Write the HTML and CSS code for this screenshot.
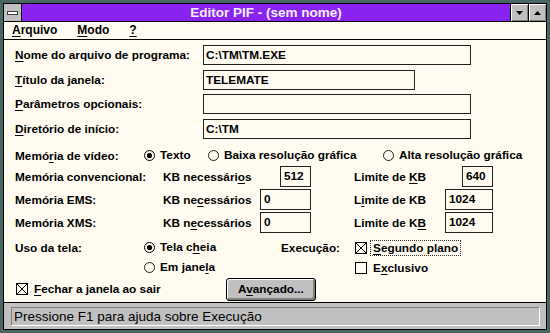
FILE: index.html
```html
<!DOCTYPE html>
<html lang="pt">
<head>
    <meta charset="UTF-8">
    <title>Editor PIF</title>
    <link rel="stylesheet" href="styles.css">
</head>
<body>

<div class="window">
  <div class="inner">

    <div class="titlebar">
        <div class="sysmenu"><span class="sysbar"></span></div>
        <div class="title">Editor PIF - (sem nome)</div>
        <div class="tbtn">
            <svg width="7" height="4" viewBox="0 0 7 4"><path d="M0 0h7L3.5 4z" fill="#000"/></svg>
        </div>
        <div class="tbtn">
            <svg width="7" height="4" viewBox="0 0 7 4"><path d="M0 4h7L3.5 0z" fill="#000"/></svg>
        </div>
    </div>

    <div class="menubar">
        <span><u>A</u>rquivo</span>
        <span><u>M</u>odo</span>
        <span><u>?</u></span>
    </div>

    <div class="content">
        <div class="field-row">
            <div class="flabel"><u>N</u>ome do arquivo de programa:</div>
            <div class="edit wide">C:\TM\TM.EXE</div>
        </div>
        <div class="field-row r2">
            <div class="flabel"><u>T</u>ítulo da janela:</div>
            <div class="edit short">TELEMATE</div>
        </div>
        <div class="field-row r3">
            <div class="flabel"><u>P</u>arâmetros opcionais:</div>
            <div class="edit wide"></div>
        </div>
        <div class="field-row r4">
            <div class="flabel"><u>D</u>iretório de início:</div>
            <div class="edit wide">C:\TM</div>
        </div>

        <div class="mrow video">
            <div class="mlabel">Memó<u>r</u>ia de vídeo:</div>
            <div class="vopt v1">
                <span class="radio"><svg width="11" height="11" viewBox="0 0 11 11"><circle cx="5.5" cy="5.5" r="5" fill="#fffbf0" stroke="#000"/><circle cx="5.5" cy="5.5" r="2.6" fill="#000"/></svg><span>Texto</span></span>
            </div>
            <div class="vopt v2">
                <span class="radio"><svg width="11" height="11" viewBox="0 0 11 11"><circle cx="5.5" cy="5.5" r="5" fill="#fffbf0" stroke="#222"/></svg><span>Baixa resolução gráfica</span></span>
            </div>
            <div class="vopt">
                <span class="radio"><svg width="11" height="11" viewBox="0 0 11 11"><circle cx="5.5" cy="5.5" r="5" fill="#fffbf0" stroke="#222"/></svg><span>Alta resolução gráfica</span></span>
            </div>
        </div>

        <div class="mrow conv">
            <div class="mlabel">Memória convencional:</div>
            <div class="kbcol">
                <span>KB necessári<u>o</u>s</span>
                <div class="numbox small">512</div>
            </div>
            <div class="limcol">
                <span>Limite de <u>K</u>B</span>
                <div class="numbox small">640</div>
            </div>
        </div>

        <div class="mrow ems">
            <div class="mlabel">Memória EMS:</div>
            <div class="kbcol">
                <span>KB ne<u>c</u>essários</span>
                <div class="numbox mid">0</div>
            </div>
            <div class="limcol">
                <span>L<u>i</u>mite de KB</span>
                <div class="numbox large">1024</div>
            </div>
        </div>

        <div class="mrow xms">
            <div class="mlabel">Memória XMS:</div>
            <div class="kbcol">
                <span>KB n<u>e</u>cessários</span>
                <div class="numbox mid">0</div>
            </div>
            <div class="limcol">
                <span>Limite de K<u>B</u></span>
                <div class="numbox large">1024</div>
            </div>
        </div>

        <div class="urow uso">
            <div class="mlabel">Uso da tela:</div>
            <div class="radcol">
                <span class="radio"><svg width="11" height="11" viewBox="0 0 11 11"><circle cx="5.5" cy="5.5" r="5" fill="#fffbf0" stroke="#000"/><circle cx="5.5" cy="5.5" r="2.6" fill="#000"/></svg><span>Tela c<u>h</u>eia</span></span>
            </div>
            <div class="exlabel">Execução:</div>
            <span class="check">
                <svg width="12" height="12" viewBox="0 0 12 12"><rect x="0.5" y="0.5" width="11" height="11" fill="#fffbf0" stroke="#000"/><path d="M1 1L11 11M11 1L1 11" stroke="#000"/></svg>
                <span class="focus"><u>S</u>egundo plano</span>
            </span>
        </div>

        <div class="urow">
            <div class="mlabel"></div>
            <div class="radcol">
                <span class="radio"><svg width="11" height="11" viewBox="0 0 11 11"><circle cx="5.5" cy="5.5" r="5" fill="#fffbf0" stroke="#222"/></svg><span>Em jane<u>l</u>a</span></span>
            </div>
            <div class="exlabel"></div>
            <span class="check">
                <svg width="12" height="12" viewBox="0 0 12 12"><rect x="0.5" y="0.5" width="11" height="11" fill="#fffbf0" stroke="#000"/></svg>
                <span>E<u>x</u>clusivo</span>
            </span>
        </div>

        <div class="brow">
            <div class="closecol">
                <span class="check">
                    <svg width="12" height="12" viewBox="0 0 12 12"><rect x="0.5" y="0.5" width="11" height="11" fill="#fffbf0" stroke="#000"/><path d="M1 1L11 11M11 1L1 11" stroke="#000"/></svg>
                    <span><u>F</u>echar a janela ao sair</span>
                </span>
            </div>
            <div class="btn">A<u>v</u>ançado...</div>
        </div>
    </div>

    <div class="statusbar">
        <div class="status-field">Pressione F1 para ajuda sobre Execução</div>
    </div>

  </div>
</div>

</body>
</html>
```

FILE: styles.css
```css
* {
    box-sizing: border-box;
}

body {
    margin: 0;
    font-family: "Liberation Sans", Arial, sans-serif;
    font-size: 11.8px;
    font-weight: bold;
    color: #000;
    white-space: nowrap;
}

u {
    text-decoration-thickness: 1px;
    text-underline-offset: 2px;
}

.window {
    width: 550px;
    height: 333px;
    border: 3px solid #4a6662;
}

.inner {
    height: 100%;
    border: 1px solid #000;
    display: flex;
    flex-direction: column;
    background: #fffbf0;
}

/* title bar */
.titlebar {
    height: 18px;
    display: flex;
    border-bottom: 1px solid #000;
    background: #8a22f2;
}

.sysmenu {
    width: 18px;
    border-right: 1px solid #000;
    background: #c0c0c0;
    display: flex;
    align-items: center;
    justify-content: center;
}

.sysbar {
    width: 11px;
    height: 4px;
    background: #fff;
    border: 1px solid #404040;
}

.title {
    flex: 1;
    text-align: center;
    color: #f6efff;
    font-size: 13.5px;
    line-height: 17px;
}

.tbtn {
    width: 18px;
    border-left: 1px solid #000;
    background: #c0c0c0;
    box-shadow: inset 1px 1px #fff, inset -1px -1px #808080;
    display: flex;
    align-items: center;
    justify-content: center;
}

/* menu */
.menubar {
    height: 18px;
    border-bottom: 1px solid #000;
    padding-left: 8px;
    display: flex;
    gap: 20px;
    line-height: 17px;
    font-size: 12px;
}

/* dialog content */
.content {
    flex: 1;
    padding: 5px 0 0 11px;
}

.field-row {
    display: flex;
    align-items: center;
    height: 20px;
}

.r2 { margin-top: 5px; }
.r3 { margin-top: 4px; }
.r4 { margin-top: 5px; }

.flabel {
    width: 188px;
}

.edit {
    height: 20px;
    border: 1px solid #222;
    padding-left: 2px;
    line-height: 18px;
}

.wide { width: 268px; }
.short { width: 212px; }

.mrow {
    display: flex;
    align-items: center;
    height: 21px;
}

.video {
    height: 20px;
    margin-top: 7px;
}

.ems, .xms {
    margin-top: 2px;
}

.mlabel {
    width: 129px;
}

.vopt.v1 { width: 64px; }
.vopt.v2 { width: 175px; }

.radio {
    display: inline-flex;
    align-items: center;
    gap: 5px;
}

.kbcol {
    width: 167px;
    padding-left: 19px;
    display: flex;
    align-items: center;
    justify-content: space-between;
}

.limcol {
    width: 139px;
    margin-left: 43px;
    display: flex;
    align-items: center;
    justify-content: space-between;
}

.numbox {
    height: 21px;
    border: 1px solid #222;
    padding: 0 3px;
    line-height: 19px;
}

.small { width: 31px; }
.mid { width: 51px; }
.large { width: 48px; }

.urow {
    display: flex;
    align-items: center;
    height: 20px;
}

.uso {
    margin-top: 5px;
}

.radcol {
    width: 137px;
}

.exlabel {
    width: 74px;
}

.check {
    display: inline-flex;
    align-items: center;
    gap: 6px;
}

.focus {
    border: 1px dotted #333;
    padding: 0 2px;
    margin-left: -3px;
}

.brow {
    display: flex;
    align-items: center;
    height: 23px;
}

.closecol {
    width: 211px;
    padding-left: 1px;
}

.btn {
    width: 90px;
    height: 23px;
    border: 1px solid #000;
    border-radius: 3px;
    background: #c0c0c0;
    box-shadow: inset 1px 1px #fff, inset -2px -2px #808080;
    text-align: center;
    line-height: 20px;
}

/* status bar */
.statusbar {
    height: 27px;
    border-top: 1px solid #000;
    background: #c0c0c0;
    padding: 4px 6px 0 7px;
}

.status-field {
    height: 19px;
    border: 1px solid;
    border-color: #808080 #fff #fff #808080;
    padding-left: 2px;
    font-weight: normal;
    font-size: 13.5px;
    line-height: 17px;
}
```
